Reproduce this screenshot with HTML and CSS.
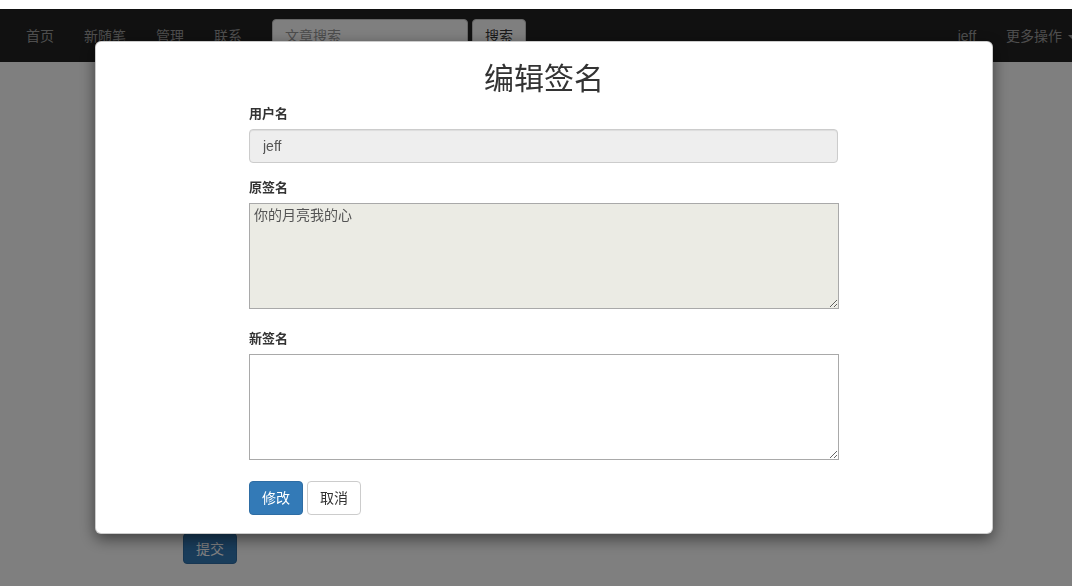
FILE: index.html
```html
<!DOCTYPE html>
<html lang="zh">
<head>
<meta charset="utf-8">
<title>编辑签名</title>
<link rel="stylesheet" href="styles.css">
</head>
<body>
<div class="topstrip"></div>
<nav class="navbar">
  <ul class="nav">
    <li><a href="#">首页</a></li>
    <li><a href="#">新随笔</a></li>
    <li><a href="#">管理</a></li>
    <li><a href="#">联系</a></li>
  </ul>
  <form class="search">
    <input class="search-input" type="text" placeholder="文章搜索">
    <button class="btn btn-default" type="button">搜索</button>
  </form>
  <ul class="nav nav-right">
    <li><a href="#">jeff</a></li>
    <li><a href="#">更多操作 <span class="caret"></span></a></li>
  </ul>
</nav>
<main class="page">
  <button class="btn btn-primary" type="button">提交</button>
</main>

<div class="backdrop"></div>
<div class="modal">
  <div class="modal-dialog">
    <h2 class="modal-title">编辑签名</h2>
    <form class="sig-form">
      <div class="group">
        <label class="lbl">用户名</label>
        <input class="field field-disabled" type="text" value="jeff" disabled>
      </div>
      <div class="group group-ta">
        <label class="lbl">原签名</label>
        <textarea class="ta" disabled>你的月亮我的心</textarea>
      </div>
      <div class="group group-ta">
        <label class="lbl">新签名</label>
        <textarea class="ta ta-new"></textarea>
      </div>
      <div class="actions">
        <button class="btn btn-primary" type="button">修改</button>
        <button class="btn btn-default" type="button">取消</button>
      </div>
    </form>
  </div>
</div>
</body>
</html>
```

FILE: styles.css
```css
* { box-sizing: border-box; }
html, body { margin: 0; padding: 0; }
body {
  font-family: "Liberation Sans", Arial, "Noto Sans CJK SC", sans-serif;
  font-size: 14px;
  line-height: 20px;
  color: #333;
  background: #fff;
  overflow: hidden;
  height: 586px;
}
.topstrip { height: 9px; background: #fff; }
.navbar {
  height: 53px;
  background: #222;
  display: flex;
  align-items: center;
  padding-left: 11px;
  white-space: nowrap;
}
.nav {
  list-style: none;
  margin: 0;
  padding: 0;
  display: flex;
}
.nav a {
  display: block;
  padding: 0 15px;
  color: #9d9d9d;
  text-decoration: none;
  line-height: 20px;
}
.nav-right { margin-left: auto; margin-right: -19px; }
.caret {
  display: inline-block;
  width: 0; height: 0;
  margin-left: 2px;
  vertical-align: middle;
  border-top: 4px solid #9d9d9d;
  border-left: 4px solid transparent;
  border-right: 4px solid transparent;
}
.search {
  display: flex;
  gap: 4px;
  margin-left: 15px;
  margin-top: 1px;
}
.search-input {
  width: 196px;
  height: 34px;
  padding: 6px 12px;
  font: inherit;
  border: 1px solid #ccc;
  border-radius: 4px;
  background: #fff;
}
.search-input::placeholder { color: #999; }
.btn {
  display: inline-block;
  height: 34px;
  padding: 6px 12px;
  font-family: inherit;
  font-size: 14px;
  line-height: 20px;
  border: 1px solid transparent;
  border-radius: 4px;
  cursor: pointer;
}
.btn-default { background: #fff; color: #333; border-color: #ccc; }
.btn-primary { background: #337ab7; color: #fff; border-color: #2e6da4; }
.page { padding: 471px 0 0 183px; }
.page .btn { height: 31px; padding: 5px 12px; }

.backdrop {
  position: fixed;
  top: 9px; left: 0; right: 0; bottom: 0;
  background: rgba(0,0,0,.5);
}
.modal {
  position: fixed;
  inset: 0;
}
.modal-dialog {
  margin: 41px 0 0 95px;
  width: 898px;
  height: 493px;
  background: #fff;
  border: 1px solid rgba(0,0,0,.2);
  border-radius: 6px;
  box-shadow: 0 5px 15px rgba(0,0,0,.5);
  padding-top: 20px;
}
.modal-title {
  margin: 0 0 9px;
  text-align: center;
  font-size: 30px;
  line-height: 33px;
  font-weight: 400;
  color: #333;
}
.sig-form { width: 590px; margin-left: 153px; }
.group { margin-bottom: 15px; }
.group-ta { margin-bottom: 20px; }
.lbl {
  display: block;
  font-weight: 700;
  font-size: 13px;
  margin-bottom: 5px;
}
.field {
  display: block;
  width: 589px;
  height: 34px;
  padding: 6px 12px 6px 13px;
  font: inherit;
  color: #555;
  border: 1px solid #ccc;
  border-radius: 4px;
  box-shadow: inset 0 1px 1px rgba(0,0,0,.075);
}
.field-disabled { background: #eee; }
.ta {
  display: block;
  width: 590px;
  height: 106px;
  padding: 3px 4px;
  font-family: "Liberation Sans", Arial, "Noto Sans CJK SC", sans-serif;
  font-size: 14px;
  line-height: 16px;
  border: 1px solid #a9a9a9;
  background: rgb(235,235,228);
  color: #545454;
  margin: 0;
  border-radius: 0;
}
.ta-new { background: #fff; color: #000; }
.actions { display: flex; gap: 4px; margin-top: 21px; }
.actions .btn { margin: 0; }
```
